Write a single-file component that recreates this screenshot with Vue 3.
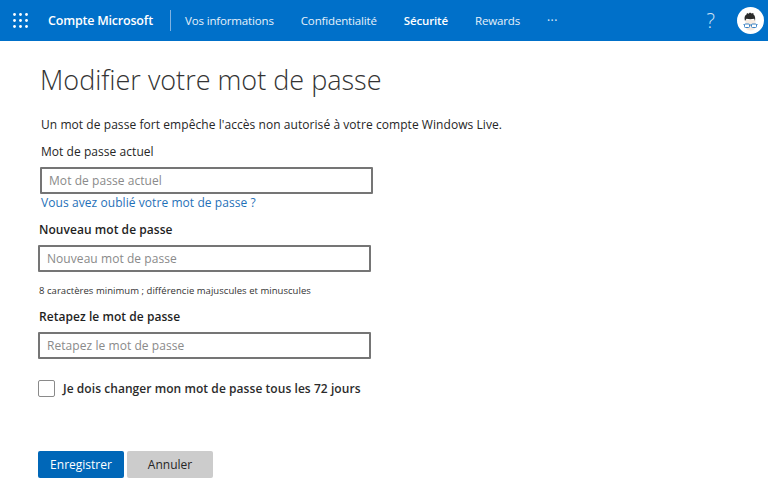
<template>
  <div class="page">
    <header class="topbar">
      <svg class="waffle" width="15" height="15" viewBox="0 0 15 15" fill="#fff">
        <template v-for="y in [1.5, 7.5, 13.5]" :key="y">
          <circle v-for="x in [1.5, 7.5, 13.5]" :key="x" :cx="x" :cy="y" r="1.4" />
        </template>
      </svg>
      <span class="brand">Compte Microsoft</span>
      <span class="divider"></span>
      <nav class="nav">
        <a v-for="item in navItems" :key="item" class="nav-item" :class="{ active: item === 'Sécurité' }">{{ item }}</a>
        <a class="nav-item more">···</a>
      </nav>
      <span class="help">?</span>
      <div class="avatar">
        <svg width="26" height="26" viewBox="0 0 26 26">
          <path d="M7.500 12v6c0 3 2 4.500 5 4.500s5-1.500 5-4.500v-6z" fill="#f6ebe1" />
          <path d="M7 13c-1-3-.5-5.500 1.500-6.500l.5-1.500 1.500.8 1.500-1.300 1.500 1 1.800-.5.200 1.500c1.500 1 2 3.500 1.500 6.500l-.8-2.200c-2.800.5-5.200.5-7.700 0z" fill="#2b2b2b" />
          <rect x="6.500" y="16" width="5" height="3.500" rx="1" fill="#fff" stroke="#3b82c4" stroke-width="1" />
          <rect x="13.500" y="16" width="5" height="3.500" rx="1" fill="#fff" stroke="#3b82c4" stroke-width="1" />
          <path d="M11.500 17h2M5.500 16.500h1M18.500 16.500h1" stroke="#3b82c4" stroke-width="1" />
        </svg>
      </div>
    </header>

    <main class="content">
      <h1 class="title">Modifier votre mot de passe</h1>
      <p class="intro">Un mot de passe fort empêche l'accès non autorisé à votre compte Windows Live.</p>

      <label class="label current-label">Mot de passe actuel</label>
      <input class="field current-field" type="text" placeholder="Mot de passe actuel" />
      <a class="forgot">Vous avez oublié votre mot de passe ?</a>

      <div class="new-group">
        <label class="label strong">Nouveau mot de passe</label>
        <input class="field" type="text" placeholder="Nouveau mot de passe" />
        <p class="hint">8 caractères minimum ; différencie majuscules et minuscules</p>

        <label class="label strong">Retapez le mot de passe</label>
        <input class="field" type="text" placeholder="Retapez le mot de passe" />

        <label class="check-row">
          <span class="box"></span>
          <span class="check-text">Je dois changer mon mot de passe tous les 72 jours</span>
        </label>

        <div class="actions">
          <button class="btn primary">Enregistrer</button>
          <button class="btn secondary">Annuler</button>
        </div>
      </div>
    </main>
  </div>
</template>

<script setup>
const navItems = ['Vos informations', 'Confidentialité', 'Sécurité', 'Rewards']
</script>

<style>
html, body {
  margin: 0;
  background: #fff;
}
</style>

<style scoped>
.page {
  width: 768px;
  height: 503px;
  overflow: hidden;
  font-family: "Open Sans", "Noto Sans", sans-serif;
  color: #262626;
}

.topbar {
  height: 41px;
  background: #0070c9;
  color: #fff;
  display: flex;
  align-items: center;
  padding-left: 13px;
  box-sizing: border-box;
}

.brand {
  margin-left: 20px;
  font-size: 12.500px;
  font-weight: 600;
  letter-spacing: -0.2px;
  width: 105px;
  white-space: nowrap;
}

.divider {
  width: 1px;
  height: 21px;
  background: #7fb2e2;
  margin-left: 17px;
}

.nav {
  display: flex;
  align-items: center;
  margin-left: 14px;
  flex: 1;
  gap: 27px;
}

.nav-item {
  font-size: 11.500px;
  letter-spacing: -0.15px;
  color: #e6f0fa;
  white-space: nowrap;
}

.nav-item.active {
  font-weight: 600;
  color: #fff;
}

.nav-item.more {
  font-size: 12px;
  letter-spacing: 0.5px;
}

.help {
  font-size: 20px;
  font-weight: 300;
  color: #cfe2f5;
  margin-right: 22px;
}

.avatar {
  width: 27px;
  height: 27px;
  border-radius: 50%;
  background: #fff;
  margin-right: 4px;
  display: flex;
  align-items: center;
  justify-content: center;
}

.content {
  padding-left: 40px;
}

.title {
  margin: 20px 0 0;
  font-size: 27px;
  line-height: 38px;
  font-weight: 300;
  color: #333;
}

.intro {
  margin: 17px 0 0 1px;
  font-size: 12px;
  line-height: 18px;
  letter-spacing: 0.06px;
}

.label {
  display: block;
  font-size: 12px;
  line-height: 18px;
  letter-spacing: 0.05px;
}

.current-label {
  margin: 9px 0 0 1px;
}

.strong {
  font-weight: 600;
  color: #1f1f1f;
  padding-left: 1px;
}

.field {
  display: block;
  width: 333px;
  height: 27px;
  box-sizing: border-box;
  border: 2px solid #757575;
  border-radius: 1px;
  padding: 0 7px;
  font: inherit;
  font-size: 12px;
  letter-spacing: 0.06px;
  outline: none;
  background: #fff;
}

.field::placeholder {
  color: #8a8a8a;
  opacity: 1;
}

.current-field {
  margin-top: 6px;
}

.forgot {
  display: block;
  margin-left: 1px;
  font-size: 12px;
  line-height: 18px;
  letter-spacing: 0.07px;
  color: #1f71b8;
}

.new-group {
  margin-left: -2px;
  margin-top: 9px;
}

.new-group .field {
  margin-top: 6px;
}

.hint {
  margin: 12px 0 0;
  padding-left: 1px;
  font-size: 9.500px;
  line-height: 14px;
  color: #333;
  letter-spacing: 0.04px;
}

.hint + .label {
  margin-top: 10px;
}

.check-row {
  display: flex;
  align-items: center;
  margin-top: 21px;
}

.box {
  width: 15px;
  height: 15px;
  border: 1px solid #8a8a8a;
  border-radius: 2px;
  background: #fff;
}

.check-text {
  margin-left: 8px;
  font-size: 12px;
  font-weight: 600;
  letter-spacing: 0.06px;
  color: #2b2b2b;
}

.actions {
  display: flex;
  gap: 3px;
  margin-top: 54px;
}

.btn {
  width: 86px;
  height: 27px;
  border: none;
  border-radius: 2px;
  font: inherit;
  font-size: 12px;
  padding: 0;
}

.primary {
  background: #0067b8;
  color: #fff;
}

.secondary {
  background: #ccc;
  color: #262626;
}
</style>
